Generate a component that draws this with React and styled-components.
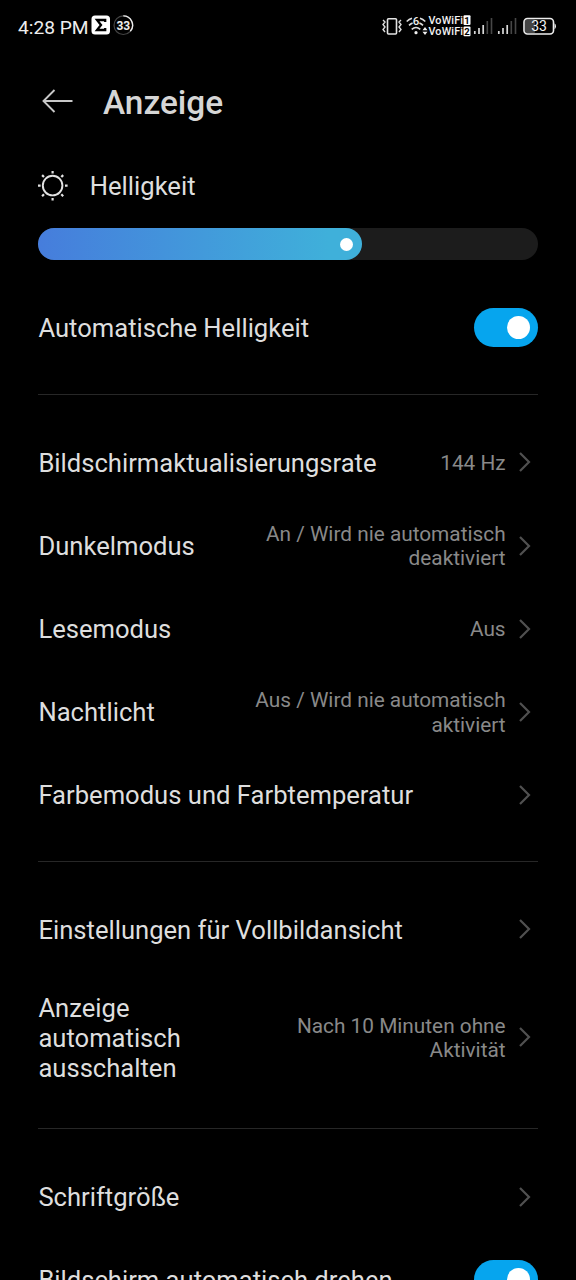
import React from "react";
import styled, { createGlobalStyle } from "styled-components";

const GlobalStyle = createGlobalStyle`
  * {
    box-sizing: border-box;
  }
  body {
    margin: 0;
    background: #000;
    overflow: hidden;
  }
`;

const Screen = styled.div`
  width: 576px;
  height: 1280px;
  overflow: hidden;
  background: #000;
  color: #dedede;
  font-family: Roboto, sans-serif;
`;

const StatusBar = styled.div`
  display: flex;
  align-items: center;
  justify-content: space-between;
  height: 54px;
  padding: 0 20px 2px 18px;
`;

const StatusGroup = styled.div`
  display: flex;
  align-items: center;
`;

const Clock = styled.span`
  font-size: 19.2px;
  line-height: 24px;
  width: 70px;
  white-space: nowrap;
  color: #eee;
  margin-top: 3px;
  margin-right: 3px;
`;

const Header = styled.header`
  display: flex;
  align-items: center;
  height: 96px;
  padding-left: 42px;
`;

const Title = styled.h1`
  margin: 2px 0 0 30px;
  font-size: 33.4px;
  line-height: 38px;
  font-weight: 500;
  color: #d6d6d6;
`;

const Content = styled.main`
  padding: 0 38.4px;
`;

const Brightness = styled.div`
  display: flex;
  align-items: center;
  height: 72px;
`;

const BrightnessLabel = styled.span`
  font-size: 25.6px;
  line-height: 30px;
  margin-left: 21.4px;
`;

const Track = styled.div`
  height: 32px;
  margin-top: 6px;
  border-radius: 16px;
  background: #1c1c1c;
`;

const Fill = styled.div`
  display: flex;
  align-items: center;
  justify-content: flex-end;
  width: 324px;
  height: 32px;
  padding-right: 9px;
  border-radius: 16px;
  background: linear-gradient(90deg, #467ddc, #3fb0da 90%);
`;

const Thumb = styled.div`
  width: 13px;
  height: 13px;
  border-radius: 50%;
  background: #fff;
`;

const Section = styled.section`
  padding: ${props => (props.first ? "26.4px" : "25.6px")} 0 24.6px;
  border-top: ${props => (props.first ? "none" : "1px solid #272727")};
`;

const Row = styled.div`
  display: flex;
  align-items: center;
  justify-content: space-between;
  height: ${props => (props.tall ? "132.8px" : "83.2px")};
  padding-right: ${props => (props.flush ? "0" : "7px")};
`;

const Label = styled.div`
  width: ${props => (props.narrow ? "170px" : "auto")};
  font-size: 25.6px;
  line-height: 30.3px;
  padding-top: 1px;
  white-space: ${props => (props.narrow ? "normal" : "nowrap")};
`;

const Side = styled.div`
  display: flex;
  align-items: center;
  gap: 12px;
`;

const Value = styled.div`
  max-width: 254px;
  font-size: 20.8px;
  line-height: 24.4px;
  padding-top: 1.4px;
  text-align: right;
  color: #898989;
`;

const Toggle = styled.div`
  display: flex;
  align-items: center;
  justify-content: flex-end;
  width: 64px;
  height: 39px;
  padding-right: 8px;
  border-radius: 20px;
  background: #06a5ee;
`;

const Knob = styled.div`
  width: 23px;
  height: 23px;
  border-radius: 50%;
  background: #fff;
`;

const Icon = styled.svg`
  display: block;
  flex: none;
  fill: none;
  font-family: Roboto, sans-serif;
`;

const displayRows = [
  { label: "Bildschirmaktualisierungsrate", value: "144 Hz" },
  { label: "Dunkelmodus", value: "An / Wird nie automatisch deaktiviert" },
  { label: "Lesemodus", value: "Aus" },
  { label: "Nachtlicht", value: "Aus / Wird nie automatisch aktiviert" },
  { label: "Farbemodus und Farbtemperatur" }
];

const screenRows = [
  { label: "Einstellungen für Vollbildansicht" },
  {
    label: "Anzeige automatisch ausschalten",
    value: "Nach 10 Minuten ohne Aktivität",
    tall: true
  }
];

function Chevron() {
  return (
    <Icon width="13" height="22" viewBox="0 0 13 22">
      <path d="M2 2l9 9-9 9" stroke="#505050" strokeWidth="2.2" />
    </Icon>
  );
}

function AppBadges() {
  return (
    <Icon width="44" height="24" viewBox="0 0 44 24">
      <rect x="0.5" y="1.5" width="18.5" height="19" rx="3.5" fill="#fff" />
      <path d="M14.2 8V6H6l4 5-4 5h8.2v-2" stroke="#000" strokeWidth="2.3" />
      <circle cx="32.3" cy="11.2" r="9.3" stroke="#444" strokeWidth="1.2" />
      <path d="M32.3 1.9a9.3 9.3 0 0 1 7 15.4" stroke="#eee" strokeWidth="1.4" />
      <text x="32.3" y="15.6" fill="#eee" fontSize="12" fontWeight="700" textAnchor="middle">
        33
      </text>
    </Icon>
  );
}

function SystemIcons() {
  return (
    <Icon width="176" height="28" viewBox="380 12 176 28">
      {/* vibrate */}
      <rect x="387.5" y="18.7" width="9" height="15.3" rx="1" stroke="#e4e4e4" strokeWidth="1.6" />
      <path
        d="M383 20l2 2-2 2.5 2 2.5-2 2.5 2 2.5M401 20l-2 2 2 2.5-2 2.5 2 2.5-2 2.5"
        stroke="#ddd"
        strokeWidth="1.4"
      />
      {/* wifi */}
      <path
        d="M406.7 21.5q2.4-2.2 5.3-3.2M420 18.3q2.9 1 5.3 3.2M409 25.4q1.6-1.6 3.6-2.4M419.4 23q2 .8 3.6 2.4M411.7 29.4q4.3-3.8 8.6 0"
        stroke="#ddd"
        strokeWidth="1.6"
      />
      <circle cx="416" cy="32.7" r="1.6" fill="#eee" />
      <text x="416" y="25" fill="#eee" fontSize="11.5" fontWeight="500" textAnchor="middle">
        6
      </text>
      <path d="M422.5 30.3l2.5-3.2 2.5 3.2zM422.5 31.8l2.5 3.2 2.5-3.2z" fill="#eee" />
      {/* call labels of both SIM cards */}
      <text x="428.5" y="24.2" fill="#f2f2f2" fontSize="10.8" fontWeight="500" textLength="34.5">
        VoWiFi
      </text>
      <text x="428.5" y="35.2" fill="#f2f2f2" fontSize="10.8" fontWeight="500" textLength="34.5">
        VoWiFi
      </text>
      <rect x="463.5" y="15.3" width="7" height="9.7" rx="1" fill="#fff" />
      <rect x="463.5" y="26.5" width="7" height="9.7" rx="1" fill="#fff" />
      <text x="467" y="23.6" fill="#000" fontSize="9.5" fontWeight="700" textAnchor="middle">
        1
      </text>
      <text x="467" y="34.8" fill="#000" fontSize="9.5" fontWeight="700" textAnchor="middle">
        2
      </text>
      {/* signal strength */}
      <path
        d="M474.8 34v-3M479 34v-6M483.2 34v-9M498.8 34v-3M503 34v-6M507.2 34v-9"
        stroke="#d8d8d8"
        strokeWidth="1.7"
      />
      <path d="M487.3 34v-13M491.5 34v-16M511.3 34v-13M515.5 34v-16" stroke="#474747" strokeWidth="1.6" />
      {/* battery */}
      <rect x="525" y="19.5" width="10" height="13.5" rx="1" fill="#454545" />
      <rect x="524" y="18.5" width="29.5" height="15.5" rx="3.5" stroke="#eee" strokeWidth="1.6" />
      <path d="M554.5 23.3q1.5.8 1.5 3t-1.5 3z" fill="#eee" />
      <text x="539" y="31" fill="#f2f2f2" fontSize="14" textAnchor="middle">
        33
      </text>
    </Icon>
  );
}

function SettingRow({ label, value, tall }) {
  return (
    <Row tall={tall}>
      <Label narrow={tall}>{label}</Label>
      <Side>
        {value && <Value>{value}</Value>}
        <Chevron />
      </Side>
    </Row>
  );
}

function ToggleRow({ label }) {
  return (
    <Row flush>
      <Label>{label}</Label>
      <Toggle>
        <Knob />
      </Toggle>
    </Row>
  );
}

function App() {
  return (
    <Screen>
      <GlobalStyle />
      <StatusBar>
        <StatusGroup>
          <Clock>4:28 PM</Clock>
          <AppBadges />
        </StatusGroup>
        <SystemIcons />
      </StatusBar>
      <Header>
        <Icon width="31" height="26" viewBox="0 0 31 26">
          <path d="M30.5 12H1.5M12.5 1l-11 11 11 11" stroke="#c8c8c8" strokeWidth="1.9" />
        </Icon>
        <Title>Anzeige</Title>
      </Header>
      <Content>
        <Brightness>
          <Icon width="30" height="30" viewBox="0 0 30 30">
            <circle cx="14.6" cy="14.6" r="9.8" stroke="#e2e2e2" strokeWidth="1.9" />
            <path
              d="M14.6 0v2.6M14.6 27v2.6M0 14.6h2.6M27 14.6h2.6M4.1 4.1l1.9 1.9M23.3 23.3l1.9 1.9M4.1 25.2l1.9-1.9M23.3 6l1.9-1.9"
              stroke="#e2e2e2"
              strokeWidth="2.2"
            />
          </Icon>
          <BrightnessLabel>Helligkeit</BrightnessLabel>
        </Brightness>
        <Track>
          <Fill>
            <Thumb />
          </Fill>
        </Track>
        <Section first>
          <ToggleRow label="Automatische Helligkeit" />
        </Section>
        <Section>
          {displayRows.map(row => (
            <SettingRow key={row.label} {...row} />
          ))}
        </Section>
        <Section>
          {screenRows.map(row => (
            <SettingRow key={row.label} {...row} />
          ))}
        </Section>
        <Section>
          <SettingRow label="Schriftgröße" />
          <ToggleRow label="Bildschirm automatisch drehen" />
        </Section>
      </Content>
    </Screen>
  );
}

export default App;
